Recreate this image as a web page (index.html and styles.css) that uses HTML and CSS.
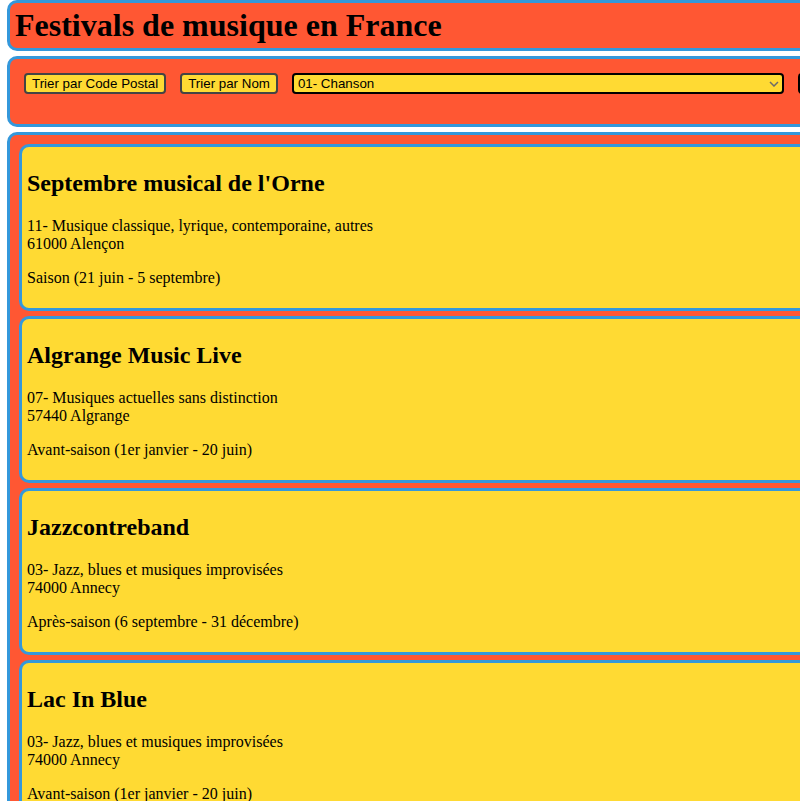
FILE: index.html
```html
<!DOCTYPE html>
<html lang="fr">
<head>
<meta charset="utf-8">
<title>Festivals de musique en France</title>
<link rel="stylesheet" href="styles.css">
</head>
<body>
<div class="page">
  <header class="header">
    <h1 class="title">Festivals de musique en France</h1>
  </header>
  <div class="controls">
    <button class="btn">Trier par Code Postal</button>
    <button class="btn">Trier par Nom</button>
    <div class="select-wrap">
      <select class="select">
        <option>01- Chanson</option>
      </select>
      <svg class="chev" width="10" height="6" viewBox="0 0 10 6"><path d="M1 1 L5 5 L9 1" fill="none" stroke="#6b6b6b" stroke-width="1.5"/></svg>
    </div>
    <input class="search" type="text">
  </div>
  <main class="list">
    <section class="card">
      <h2 class="card-title">Septembre musical de l'Orne</h2>
      <p class="card-text">11- Musique classique, lyrique, contemporaine, autres<br>61000 Alençon</p>
      <p class="card-text">Saison (21 juin - 5 septembre)</p>
    </section>
    <section class="card">
      <h2 class="card-title">Algrange Music Live</h2>
      <p class="card-text">07- Musiques actuelles sans distinction<br>57440 Algrange</p>
      <p class="card-text">Avant-saison (1er janvier - 20 juin)</p>
    </section>
    <section class="card">
      <h2 class="card-title">Jazzcontreband</h2>
      <p class="card-text">03- Jazz, blues et musiques improvisées<br>74000 Annecy</p>
      <p class="card-text">Après-saison (6 septembre - 31 décembre)</p>
    </section>
    <section class="card">
      <h2 class="card-title">Lac In Blue</h2>
      <p class="card-text">03- Jazz, blues et musiques improvisées<br>74000 Annecy</p>
      <p class="card-text">Avant-saison (1er janvier - 20 juin)</p>
    </section>
  </main>
</div>
</body>
</html>
```
FILE: styles.css
```css
html, body {
  margin: 0;
  padding: 0;
  background: #ffffff;
}
body {
  font-family: "Liberation Serif", "Times New Roman", serif;
  color: #000;
}
.page {
  width: 1200px;
  padding: 0 7px;
  display: flex;
  flex-direction: column;
  gap: 5px;
}
.header {
  background: #FF5733;
  border: 3px solid #3498DB;
  border-radius: 10px;
  padding: 4px 5px;
}
.title {
  margin: 0;
  font-size: 32px;
  font-weight: bold;
}
.controls {
  background: #FF5733;
  border: 3px solid #3498DB;
  border-radius: 10px;
  padding: 14px 14px 30px;
  display: flex;
  align-items: center;
  gap: 14px;
}
.btn {
  font-family: "Liberation Sans", Arial, sans-serif;
  font-size: 13.33px;
  line-height: 15px;
  background: #FFDA33;
  color: #000;
  border: 2px solid #444;
  border-radius: 4px;
  padding: 1px 6px;
  height: 21px;
}
.select-wrap {
  position: relative;
  width: 492px;
  height: 21px;
}
.select {
  appearance: none;
  -webkit-appearance: none;
  width: 100%;
  height: 21px;
  font-family: "Liberation Sans", Arial, sans-serif;
  font-size: 13.33px;
  background: #FFDA33;
  color: #000;
  border: 2px solid #000;
  border-radius: 4px;
  padding: 0 4px;
  margin: 0;
}
.chev {
  position: absolute;
  right: 5px;
  top: 8px;
  pointer-events: none;
}
.search {
  width: 160px;
  height: 21px;
  box-sizing: border-box;
  background: #FFDA33;
  border: 2px solid #000;
  border-radius: 4px;
}
.list {
  background: #FF5733;
  border: 3px solid #3498DB;
  border-radius: 10px;
  padding: 9px 10px 10px 9px;
  display: flex;
  flex-direction: column;
  gap: 5px;
}
.card {
  background: #FFDA33;
  border: 3px solid #3498DB;
  border-radius: 10px;
  padding: 3px 5px 5px;
}
.card-title {
  font-size: 24px;
  font-weight: bold;
  margin: 20px 0;
}
.card-text {
  font-size: 16px;
  margin: 16px 0;
}
```
